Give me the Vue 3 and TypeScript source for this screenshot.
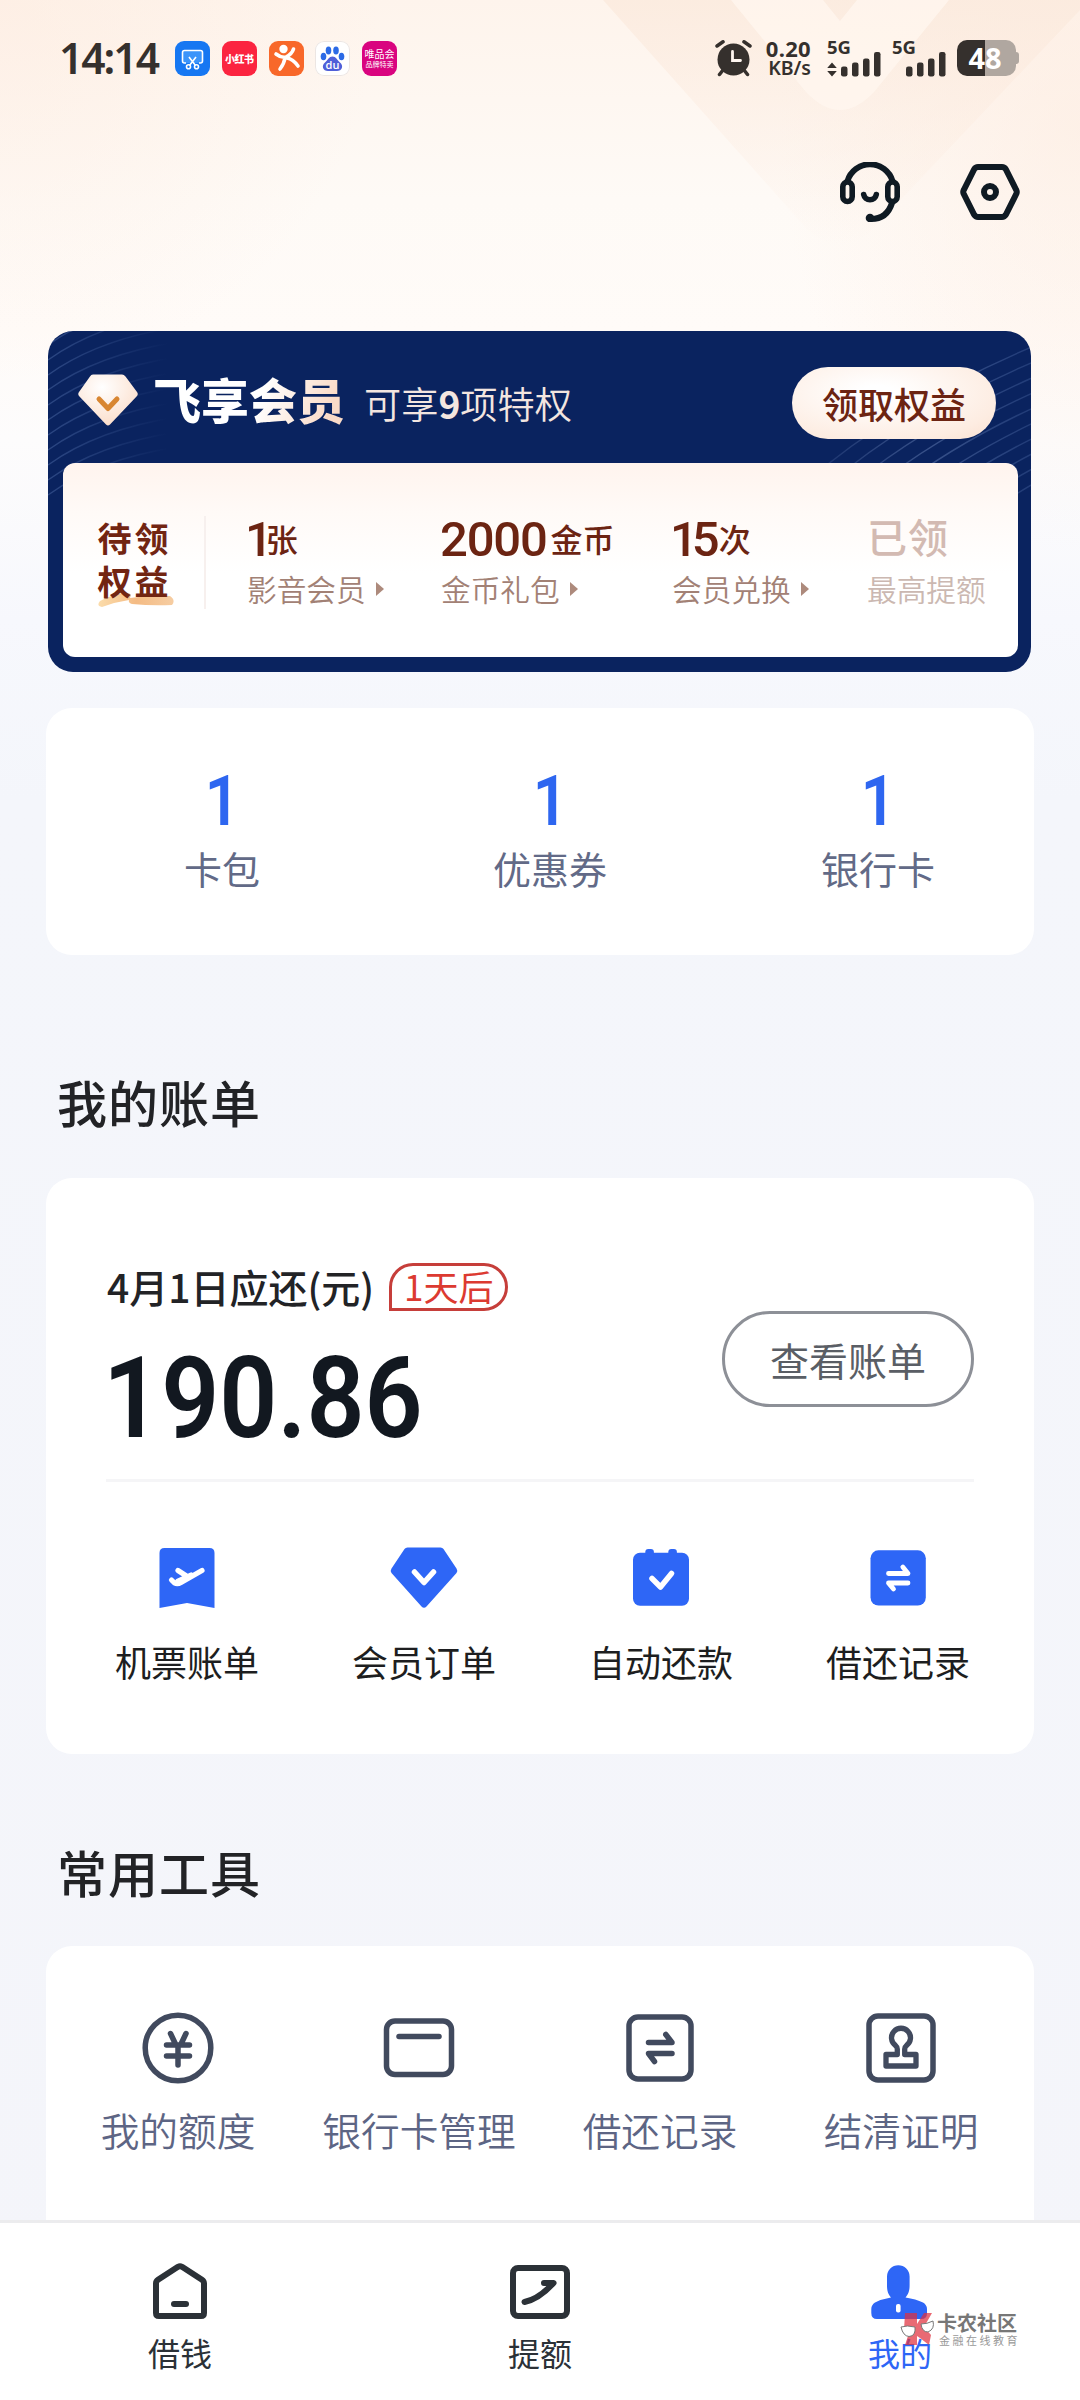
<script setup lang="ts">
interface Perk { num: string; unit: string; label: string; done?: boolean }
interface Entry { icon: string; label: string }

const perks: Perk[] = [
  { num: '1', unit: '张', label: '影音会员' },
  { num: '2000', unit: '金币', label: '金币礼包' },
  { num: '15', unit: '次', label: '会员兑换' },
  { num: '', unit: '已领', label: '最高提额', done: true },
]
const stats = [
  { value: 1, label: '卡包' },
  { value: 1, label: '优惠券' },
  { value: 1, label: '银行卡' },
]
const billEntries: Entry[] = [
  { icon: 'ticket', label: '机票账单' },
  { icon: 'gem', label: '会员订单' },
  { icon: 'calendar', label: '自动还款' },
  { icon: 'swap', label: '借还记录' },
]
const tools: Entry[] = [
  { icon: 'yen', label: '我的额度' },
  { icon: 'card', label: '银行卡管理' },
  { icon: 'swap', label: '借还记录' },
  { icon: 'stamp', label: '结清证明' },
]
const tabs: Entry[] = [
  { icon: 'home', label: '借钱' },
  { icon: 'raise', label: '提额' },
  { icon: 'me', label: '我的' },
]
const leftWaves = Array.from({ length: 11 }, (_, i) => i * 15)
const rightWaves = Array.from({ length: 10 }, (_, i) => i * 22)
</script>

<template>
  <div class="page">
    <svg class="backdrop" width="1080" height="420" viewBox="0 0 1080 420">
      <defs>
        <linearGradient id="fade" x1="0" y1="0" x2="0" y2="1">
          <stop offset="0" stop-color="#fbeadd" stop-opacity=".8" />
          <stop offset=".5" stop-color="#fcebdf" stop-opacity=".4" />
          <stop offset="1" stop-color="#fcebdf" stop-opacity="0" />
        </linearGradient>
      </defs>
      <path d="M603 0L806 228Q840 262 874 228L1080 10V0Z" fill="url(#fade)" />
      <path d="M731 0L806 92Q840 128 874 92L949 0H857L840 21L823 0Z" fill="#fff6ef" fill-opacity=".8" />
    </svg>

    <header class="status">
      <span class="clock">14:14</span>
      <div class="apps">
        <span class="app blue">
          <svg width="35" height="35" viewBox="0 0 35 35" fill="none" stroke="#fff" stroke-width="1.6">
            <path d="M11 22H9.500Q7.500 22 7.500 20V11.500Q7.500 9.500 9.500 9.500H25.500Q27.500 9.500 27.500 11.500V20Q27.500 22 25.500 22H24" fill="#3b94fa" />
            <path d="M14 16L20.500 24.500M21 16L14.500 24.500" />
            <circle cx="13.500" cy="25.700" r="2" /><circle cx="21.500" cy="25.700" r="2" />
          </svg>
        </span>
        <span class="app red">小红书</span>
        <span class="app orange">
          <svg width="35" height="35" viewBox="0 0 35 35" fill="none" stroke="#fff" stroke-width="3.600" stroke-linecap="round">
            <circle cx="14.500" cy="8" r="4.200" fill="#fff" stroke="none" />
            <path d="M7 13Q12 17 17 16Q23 13 24.500 8M16 17Q15 23 11 28M18 17Q24 18 29 25" />
          </svg>
        </span>
        <span class="app white">
          <svg width="35" height="35" viewBox="0 0 35 35">
            <g fill="#2b6ae6">
              <ellipse cx="8.500" cy="15.500" rx="2.800" ry="3.800" /><ellipse cx="13.500" cy="9.500" rx="2.800" ry="4" />
              <ellipse cx="21" cy="9.500" rx="2.800" ry="4" /><ellipse cx="26.500" cy="15.500" rx="2.800" ry="3.800" />
              <path d="M17.500 15.500C21 15.500 22 19 25 21.500C29 25 27 30 22 30H13C8 30 6 25 10 21.500C13 19 14 15.500 17.500 15.500Z" fill="#4f5fd8" />
            </g>
            <text x="17.500" y="28" text-anchor="middle" fill="#fff" font-family="Open Sans, sans-serif" font-weight="600" font-size="11">du</text>
          </svg>
        </span>
        <span class="app pink"><b>唯品会</b><i>品牌特卖</i></span>
      </div>
      <svg class="alarm" width="37" height="37" viewBox="0 0 37 37" fill="none" stroke="#35302d" stroke-linecap="round">
        <circle cx="18.500" cy="19.500" r="16" fill="#35302d" stroke="none" />
        <path d="M2 6L8 1.800M35 6L29 1.800M8 30L4.500 34.500M29 30L32.500 34.500" stroke-width="3.500" />
        <path d="M17.500 11.500V20.500H25.500" stroke="#fff6f0" stroke-width="2.800" />
      </svg>
      <div class="speed"><span>0.20</span><span class="kb">KB/s</span></div>
      <svg class="signal" width="56" height="53" viewBox="0 -8 56 53" fill="#35302d">
        <text x="0" y="14" font-family="Noto Sans, sans-serif" font-weight="700" font-size="18.500" textLength="24">5G</text>
        <path d="M5 22.500L9.800 28H.2ZM5 36.500L9.800 31H.2Z" />
        <rect x="14" y="26.500" width="6.500" height="10" rx="2.200" /><rect x="25" y="22.500" width="6.500" height="14" rx="2.200" />
        <rect x="36" y="18.500" width="6.500" height="18" rx="2.200" /><rect x="47" y="12" width="6.500" height="24.500" rx="2.200" />
      </svg>
      <svg class="signal two" width="56" height="53" viewBox="0 -8 56 53" fill="#35302d">
        <text x="0" y="14" font-family="Noto Sans, sans-serif" font-weight="700" font-size="18.500" textLength="24">5G</text>
        <rect x="14" y="26.500" width="6.500" height="10" rx="2.200" /><rect x="25" y="22.500" width="6.500" height="14" rx="2.200" />
        <rect x="36" y="18.500" width="6.500" height="18" rx="2.200" /><rect x="47" y="12" width="6.500" height="24.500" rx="2.200" />
      </svg>
      <div class="battery"><span>48</span></div><i class="tip"></i>
    </header>

    <nav class="actions">
      <svg width="60" height="60" viewBox="0 0 60 60" fill="none" stroke="#0f1a23" stroke-width="6" stroke-linecap="round">
        <path d="M7.500 19A23.500 23.500 0 0 1 52.500 19" />
        <rect x="2.800" y="20" width="9.400" height="19.500" rx="4.700" stroke-width="5.600" />
        <rect x="47.800" y="20" width="9.400" height="19.500" rx="4.700" stroke-width="5.600" />
        <path d="M23.700 32.500A6.400 6.400 0 0 0 36.300 32.500" stroke-width="5.600" />
        <path d="M52 41Q47 57 31 57" />
        <circle cx="30" cy="56" r="4.300" fill="#0f1a23" stroke="none" />
      </svg>
      <svg width="60" height="60" viewBox="0 0 60 60" fill="none" stroke="#0f1a23" stroke-width="6">
        <path d="M18 5H42Q44.500 5 45.800 7.200L56 27.500Q57.500 30 56 32.500L45.800 52.800Q44.500 55 42 55H18Q15.500 55 14.200 52.800L4 32.500Q2.500 30 4 27.500L14.200 7.200Q15.500 5 18 5Z" />
        <circle cx="30" cy="30" r="6" />
      </svg>
    </nav>

    <section class="member">
      <svg class="waves" width="983" height="341" viewBox="0 0 983 341" fill="none" stroke-width="1.400">
        <defs>
          <linearGradient id="wl" gradientUnits="userSpaceOnUse" x1="0" y1="0" x2="120" y2="0">
            <stop offset="0" stop-color="#5a78b4" stop-opacity=".42" /><stop offset="1" stop-color="#5a78b4" stop-opacity="0" />
          </linearGradient>
          <linearGradient id="wr" gradientUnits="userSpaceOnUse" x1="780" y1="0" x2="983" y2="0">
            <stop offset="0" stop-color="#7089bd" stop-opacity=".2" /><stop offset=".5" stop-color="#7089bd" stop-opacity=".45" /><stop offset="1" stop-color="#5a78b4" stop-opacity=".3" />
          </linearGradient>
        </defs>
        <path v-for="y in leftWaves" :key="'l' + y" :d="`M0 ${y + 14}Q50 ${y - 22} 130 ${y - 34}`" stroke="url(#wl)" />
        <path v-for="y in rightWaves" :key="'r' + y" :d="`M${760 + y} ${150 + y * 0.1}Q${850 + y} ${70 + y * 0.2} ${1010 + y} ${5 + y * 0.3}`" stroke="url(#wr)" />
      </svg>
      <div class="member-head">
        <svg class="member-gem" width="60" height="52" viewBox="0 0 60 52">
          <defs>
            <radialGradient id="gemfill" cx=".4" cy=".25" r=".8">
              <stop offset="0" stop-color="#fff" /><stop offset="1" stop-color="#fbdcc8" />
            </radialGradient>
          </defs>
          <path d="M15 .5H44Q46 .5 47.500 2.500L59 18Q60.500 20 59 22L32 50.500Q30 52.500 28 50.500L1 22Q-.5 20 1 18L12 2.500Q13 .5 15 .5Z" fill="url(#gemfill)" />
          <path d="M21 25L30 34.500L39 25" fill="none" stroke="#d88632" stroke-width="5" stroke-linecap="round" stroke-linejoin="round" />
        </svg>
        <h1>飞享会员</h1>
        <p>可享<b>9</b>项特权</p>
        <button class="claim">领取权益</button>
      </div>
      <div class="member-body">
        <div class="owed">
          <span>待领</span><span>权益</span>
          <svg class="brush" width="78" height="16" viewBox="0 0 78 16">
            <defs>
              <linearGradient id="brush" x1="0" x2="1"><stop offset="0" stop-color="#fbdcab" /><stop offset=".5" stop-color="#f4bb84" /><stop offset="1" stop-color="#f6cda2" /></linearGradient>
            </defs>
            <path d="M3 9Q14 3 26 1Q36 0 33 6Q52 3 73 4Q79 8 75 13Q55 14 35 12Q31 11 32 8Q18 10 5 15Q-1 14 3 9Z" fill="url(#brush)" />
          </svg>
        </div>
        <div class="perks">
          <div v-for="p in perks" :key="p.label" class="perk" :class="{ done: p.done }">
            <div class="perk-top"><span v-if="p.num" class="perk-num">{{ p.num }}</span><span class="unit">{{ p.unit }}</span></div>
            <div class="perk-label">{{ p.label }}<i v-if="!p.done"></i></div>
          </div>
        </div>
      </div>
    </section>

    <section class="card stats">
      <div v-for="s in stats" :key="s.label" class="stat">
        <strong>{{ s.value }}</strong><span>{{ s.label }}</span>
      </div>
    </section>

    <h2 class="bill-title">我的账单</h2>
    <section class="card bill">
      <div class="bill-top">
        <div>
          <div class="due"><span>4月1日应还(元)</span><em>1天后</em></div>
          <div class="amount">190.86</div>
        </div>
        <button class="view">查看账单</button>
      </div>
      <div class="entries">
        <div v-for="e in billEntries" :key="e.label" class="entry">
          <svg width="72" height="72" viewBox="0 0 72 72" fill="none" stroke="#fff" stroke-width="5.500" stroke-linecap="round" stroke-linejoin="round">
            <template v-if="e.icon === 'ticket'">
              <path d="M8.500 11Q8.500 6 13.500 6H58.500Q63.500 6 63.500 11V66L36 61L8.500 66Z" fill="#2e66f6" stroke="none" />
              <path d="M20.500 38L23.500 41Q26.500 42.500 30 40.500L51 28.500M27 28.500L37 35M27 39L40 33" stroke-width="5.200" />
            </template>
            <template v-else-if="e.icon === 'gem'">
              <path d="M19.500 5.500H52.500Q54.500 5.500 55.500 7L68.500 26.500Q70 28.700 68.500 31L38.500 64.500Q36 67 33.500 64.500L3.500 31Q2 28.700 3.500 26.500L16.500 7Q17.500 5.500 19.500 5.500Z" fill="#2e66f6" stroke="none" />
              <path d="M26.500 30L36 40.500L45.500 30" />
            </template>
            <template v-else-if="e.icon === 'calendar'">
              <g fill="#2e66f6" stroke="none">
                <rect x="8" y="10.700" width="56" height="53" rx="7" />
                <rect x="20.300" y="7" width="8.600" height="10" rx="3" /><rect x="43.300" y="7" width="8.600" height="10" rx="3" />
              </g>
              <path d="M27 36.500L35.500 45L46.500 31.500" />
            </template>
            <template v-else>
              <rect x="8.500" y="8.300" width="55.300" height="55.300" rx="8" fill="#2e66f6" stroke="none" />
              <path d="M26.500 31.500H46L40.800 25M46 41H26.500L31.500 47" stroke-width="4.800" />
            </template>
          </svg>
          <span>{{ e.label }}</span>
        </div>
      </div>
    </section>

    <h2 class="tool-title">常用工具</h2>
    <section class="card tools">
      <div v-for="t in tools" :key="t.label" class="tool">
        <svg width="72" height="72" viewBox="0 0 72 72" fill="none" stroke="#414a5e" stroke-width="5.500" stroke-linecap="round" stroke-linejoin="round">
          <template v-if="t.icon === 'yen'">
            <circle cx="36" cy="36" r="32.800" />
            <path d="M28.500 21.500L33 31M44 21.500L39.500 31M24.500 33H47.500M24.500 44H47.500M36 33V53" />
          </template>
          <template v-else-if="t.icon === 'card'">
            <rect x="3.500" y="9" width="65" height="53.500" rx="8.500" />
            <path d="M16 24.500H56" />
          </template>
          <template v-else-if="t.icon === 'swap'">
            <rect x="5" y="5" width="62" height="62" rx="9" />
            <path d="M24.500 30.500H48L41.800 22.500M48 41.500H24.500L30.500 49.500" />
          </template>
          <template v-else>
            <rect x="4" y="4" width="64" height="64" rx="9" />
            <path d="M21 42.500H32.300V37Q32.300 35 30.500 33.500A9.500 9.500 0 1 1 41.500 33.500Q39.700 35 39.700 37V42.500H51V54H21Z" stroke-width="5.300" />
          </template>
        </svg>
        <span>{{ t.label }}</span>
      </div>
    </section>

    <footer class="tabs">
      <div v-for="t in tabs" :key="t.label" class="tab" :class="{ active: t.icon === 'me' }">
        <svg width="60" height="60" viewBox="0 0 60 60" fill="none" stroke="#2b3137" stroke-width="6" stroke-linecap="round" stroke-linejoin="round">
          <template v-if="t.icon === 'home'">
            <path d="M6 21.500Q6 19 8 17.700L28 4.800Q30 3.700 32 4.800L52 17.700Q54 19 54 21.500V51Q54 54 51 54H9Q6 54 6 51Z" />
            <path d="M24 42H36" />
          </template>
          <template v-else-if="t.icon === 'raise'">
            <rect x="3" y="6" width="54" height="48" rx="5" />
            <path d="M14.500 40Q29 37 43.500 21H34" />
          </template>
          <template v-else>
            <g stroke="none" fill="#2e66f6">
              <path d="M17 14.500A11.300 11.300 0 0 1 39.600 14.500V23C39.600 29 38.500 32 35.500 35.500Q46 37 53 40.500Q57 43 57 47V51Q57 57 51.500 57H7Q1.300 57 1.300 51V47Q1.300 43 5 40.500Q12 37 21 35.500C18 32 17 29 17 23Z" />
              <rect x="26" y="42" width="4.600" height="8.500" rx="2" fill="#fff" />
            </g>
          </template>
        </svg>
        <span>{{ t.label }}</span>
      </div>
    </footer>

    <div class="watermark">
      <svg width="35" height="34" viewBox="0 0 35 34">
        <path d="M5 1H17V12L24 1H32L24 15L31 23L29 33L20 26L17 24V33H5L8 24L4 18Z" fill="#e0313f" fill-opacity=".72" />
        <path d="M1 15Q7 13 15 15Q16 24 9 24.500Q3 24 1 15ZM21 12Q27 12 33 9Q35 17 28 20Q22 20 21 12Z" fill="#fff" stroke="#777" stroke-width="1" />
      </svg>
      <div><b>卡农社区</b><span>金融在线教育</span></div>
    </div>
  </div>
</template>

<style>
body { margin: 0; }
</style>

<style scoped>
.page {
  position: relative;
  box-sizing: border-box;
  width: 1080px;
  height: 2400px;
  overflow: hidden;
  font-family: "Noto Sans CJK SC", sans-serif;
  color: #222326;
  background:
    radial-gradient(ellipse 380px 380px at 0 0, rgba(253, 233, 220, .45), rgba(253, 233, 220, 0)),
    radial-gradient(ellipse 300px 420px at 1080px 130px, rgba(253, 233, 220, .5), rgba(253, 233, 220, 0)),
    linear-gradient(180deg, #fef4ec 0, #fefaf6 200px, #fffbf8 330px, #fdfcfc 440px, #f7f8fd 620px, #f4f6fb 800px, #f4f5fa 100%);
}
.backdrop { position: absolute; left: 0; top: 0; }
h1, h2, p { margin: 0; }
button { padding: 0; font-family: inherit; }
i, em { font-style: normal; }

.status {
  position: relative;
  display: flex;
  align-items: center;
  height: 116px;
  padding-left: 59px;
}
.clock {
  width: 116px;
  margin-top: -1px;
  font: 600 42.500px/60px "Noto Sans", sans-serif;
  letter-spacing: -2px;
  color: #35302d;
  white-space: nowrap;
}
.apps { display: flex; gap: 11.750px; }
.app {
  display: flex;
  flex-direction: column;
  align-items: center;
  justify-content: center;
  width: 35px;
  height: 35px;
  border-radius: 9px;
  color: #fff;
  white-space: nowrap;
}
.blue { background: #1677f2; }
.red { background: #fb2440; font-size: 10px; font-weight: 900; letter-spacing: -.5px; }
.orange { background: #f8682a; }
.white { background: #fff; box-shadow: inset 0 0 0 1px #ece6e3; }
.pink { background: #d9047f; }
.pink b { font-size: 10px; line-height: 12px; font-weight: 400; }
.pink i { font-size: 7px; line-height: 9px; }
.alarm { margin-left: 318px; }
.speed {
  display: flex;
  flex-direction: column;
  align-items: flex-end;
  width: 58px;
  margin-right: 16.500px;
  margin-left: 1px;
  font: 700 22px/20px "Noto Sans", sans-serif;
  letter-spacing: .3px;
  color: #35302d;
}
.kb { font-size: 19.500px; font-weight: 600; line-height: 20px; letter-spacing: 0; }
.signal { margin-left: -1px; }
.signal.two { margin-left: 9px; }
.battery {
  width: 59px;
  height: 36px;
  margin-left: 9px;
  border-radius: 10px;
  text-align: center;
  font: 700 29px/35px "Noto Sans", sans-serif;
  color: #fff;
  background: linear-gradient(90deg, #35302d 28px, #b0a7a0 28px);
}
.battery span { margin-right: 2px; }
.tip { width: 3px; height: 12px; border-radius: 0 3px 3px 0; background: #b0a7a0; }

.actions {
  position: relative;
  display: flex;
  align-items: center;
  justify-content: flex-end;
  gap: 60px;
  height: 152px;
  padding-right: 60px;
}

.member {
  position: relative;
  width: 983px;
  height: 341px;
  margin: 63px 0 0 48px;
  border-radius: 25px;
  overflow: hidden;
  background: #0a235f;
}
.waves { position: absolute; left: 0; top: 0; }
.member-head {
  position: relative;
  display: flex;
  align-items: center;
  box-sizing: border-box;
  height: 132px;
  padding: 10px 35px 0 30px;
}
.member-gem { margin-bottom: 4px; }
.member-head h1 {
  margin: 0 0 9px 15px;
  font-size: 48px;
  line-height: 60px;
  font-weight: 900;
  color: transparent;
  background: linear-gradient(110deg, #fff 55%, #fadbc8 90%);
  background-clip: text;
  -webkit-background-clip: text;
}
.member-head p { margin: 2px 0 0 19px; font-size: 37.200px; line-height: 44px; font-weight: 350; color: #f3e6e0; }
.claim {
  width: 204px;
  height: 72px;
  margin: 2px 0 0 auto;
  border: 0;
  border-radius: 36px;
  font-size: 36px;
  line-height: 68px;
  font-weight: 500;
  color: #6c2412;
  background: radial-gradient(ellipse at 42% 35%, #fff 10%, #fdece1 75%, #fae0d0 100%);
}
.member-body {
  position: relative;
  display: flex;
  width: 955px;
  height: 194px;
  margin-left: 14.500px;
  border-radius: 12px;
  background: linear-gradient(180deg, #fff4ee 0, #fffaf7 50px, #fff 110px);
}
.owed {
  position: relative;
  display: flex;
  flex-direction: column;
  align-items: flex-start;
  box-sizing: border-box;
  width: 143px;
  height: 93px;
  margin-top: 53px;
  padding-left: 35px;
  border-right: 2px solid #f7f0ee;
  font-size: 34px;
  line-height: 43px;
  letter-spacing: 3px;
  font-weight: 700;
  color: #722512;
}
.owed span { position: relative; z-index: 1; }
.brush { position: absolute; left: 34px; top: 76px; }
.perks { display: grid; grid-template-columns: 194px 231px 195px 120px; padding: 53px 0 0 41.500px; }
.perk-top { display: flex; align-items: flex-start; height: 54px; color: #6c2412; }
.perk-num { font: 500 49px/48px Roboto, sans-serif; letter-spacing: -1.200px; margin-left: -1px; margin-right: 4px; }
.perk:nth-child(1) .perk-num { margin-left: -2px; margin-right: -6px; }
.perk:nth-child(3) .perk-num { margin-left: -2px; margin-right: 5px; letter-spacing: -6px; }
.unit { font-size: 32px; line-height: 44px; font-weight: 500; }
.perk-label { display: flex; align-items: center; font-size: 29.700px; line-height: 37px; font-weight: 350; color: #a28175; white-space: nowrap; }
.perk-label i {
  margin: 1px 0 0 10px;
  border-left: 8px solid #ad8a7c;
  border-top: 7px solid transparent;
  border-bottom: 7px solid transparent;
}
.done .unit { font-size: 40px; line-height: 41px; font-weight: 500; letter-spacing: 1px; color: #d3bab2; }
.done .perk-label { color: #cbb8b1; }

.card { position: relative; box-sizing: border-box; width: 988px; margin-left: 46px; border-radius: 26px; background: #fff; }
.stats { display: grid; grid-template-columns: repeat(3, 328px); height: 247px; margin-top: 36px; padding: 57px 0 0 12px; }
.stat { display: flex; flex-direction: column; align-items: center; }
.stat strong { font: 600 71px/72px Roboto, sans-serif; color: #2e66f0; transform: scaleX(.86); }
.stat span { margin-top: 11px; font-size: 38px; line-height: 40px; color: #626a87; }

h2 { margin-left: 57px; font-size: 50px; line-height: 60px; font-weight: 500; letter-spacing: 1px; color: #222326; }
.bill-title { margin-top: 116px; margin-bottom: 47px; }
.bill { height: 576px; }
.bill-top {
  display: flex;
  justify-content: space-between;
  box-sizing: border-box;
  height: 304px;
  margin: 0 60px;
  padding-top: 84px;
  border-bottom: 3px solid #f5f5f7;
}
.due { display: flex; align-items: center; height: 50px; margin-left: 1px; font-size: 39px; line-height: 45px; font-weight: 500; white-space: nowrap; }
.due span { margin-top: -1px; }
.due em {
  box-sizing: border-box;
  width: 119px;
  height: 48px;
  margin: 0 0 0 15px;
  border: 3px solid #c63e3a;
  border-radius: 24px 24px 24px 0;
  text-align: center;
  font-size: 35px;
  line-height: 39px;
  font-weight: 400;
  color: #dc3a31;
}
.amount {
  margin-top: 29px;
  margin-left: -3px;
  font: 600 114px/114px Roboto, sans-serif;
  color: #121820;
  transform: scaleX(.893);
  transform-origin: left;
}
.view {
  box-sizing: border-box;
  width: 252px;
  height: 96px;
  margin-top: 49px;
  border: 3px solid #8d9097;
  border-radius: 48px;
  font-size: 39px;
  line-height: 83px;
  color: #5a5e65;
  background: #fff;
}
.entries { display: grid; grid-template-columns: repeat(4, 237px); padding: 60px 0 0 22.500px; }
.entry, .tool, .tab { display: flex; flex-direction: column; align-items: center; white-space: nowrap; }
.entry span { margin-top: 27px; font-size: 36px; line-height: 40px; color: #1d1e20; }

.tool-title { margin-top: 87px; margin-bottom: 45px; }
.tools { display: grid; grid-template-columns: repeat(4, 241px); height: 274px; padding: 66px 0 0 11.500px; border-radius: 26px 26px 0 0; }
.tool span { margin-top: 25px; font-size: 38.700px; line-height: 40px; font-weight: 350; color: #5d6584; }

.tabs {
  position: relative;
  display: grid;
  grid-template-columns: repeat(3, 360px);
  height: 177px;
  border-top: 3px solid #ececee;
  background: #fff;
}
.tab { padding-top: 39px; }
.tab span { margin-top: 10px; font-size: 32px; line-height: 40px; color: #2b3137; }
.tab.active span { color: #2e66f6; }

.watermark { position: absolute; left: 900px; top: 2312px; display: flex; gap: 2px; color: #777; }
.watermark div { display: flex; flex-direction: column; padding-top: 1px; white-space: nowrap; }
.watermark b { font-size: 20px; line-height: 20px; font-weight: 700; }
.watermark span { margin: 1px 0 0 2px; font-size: 11px; line-height: 12px; letter-spacing: 2.500px; color: #999; }
</style>
